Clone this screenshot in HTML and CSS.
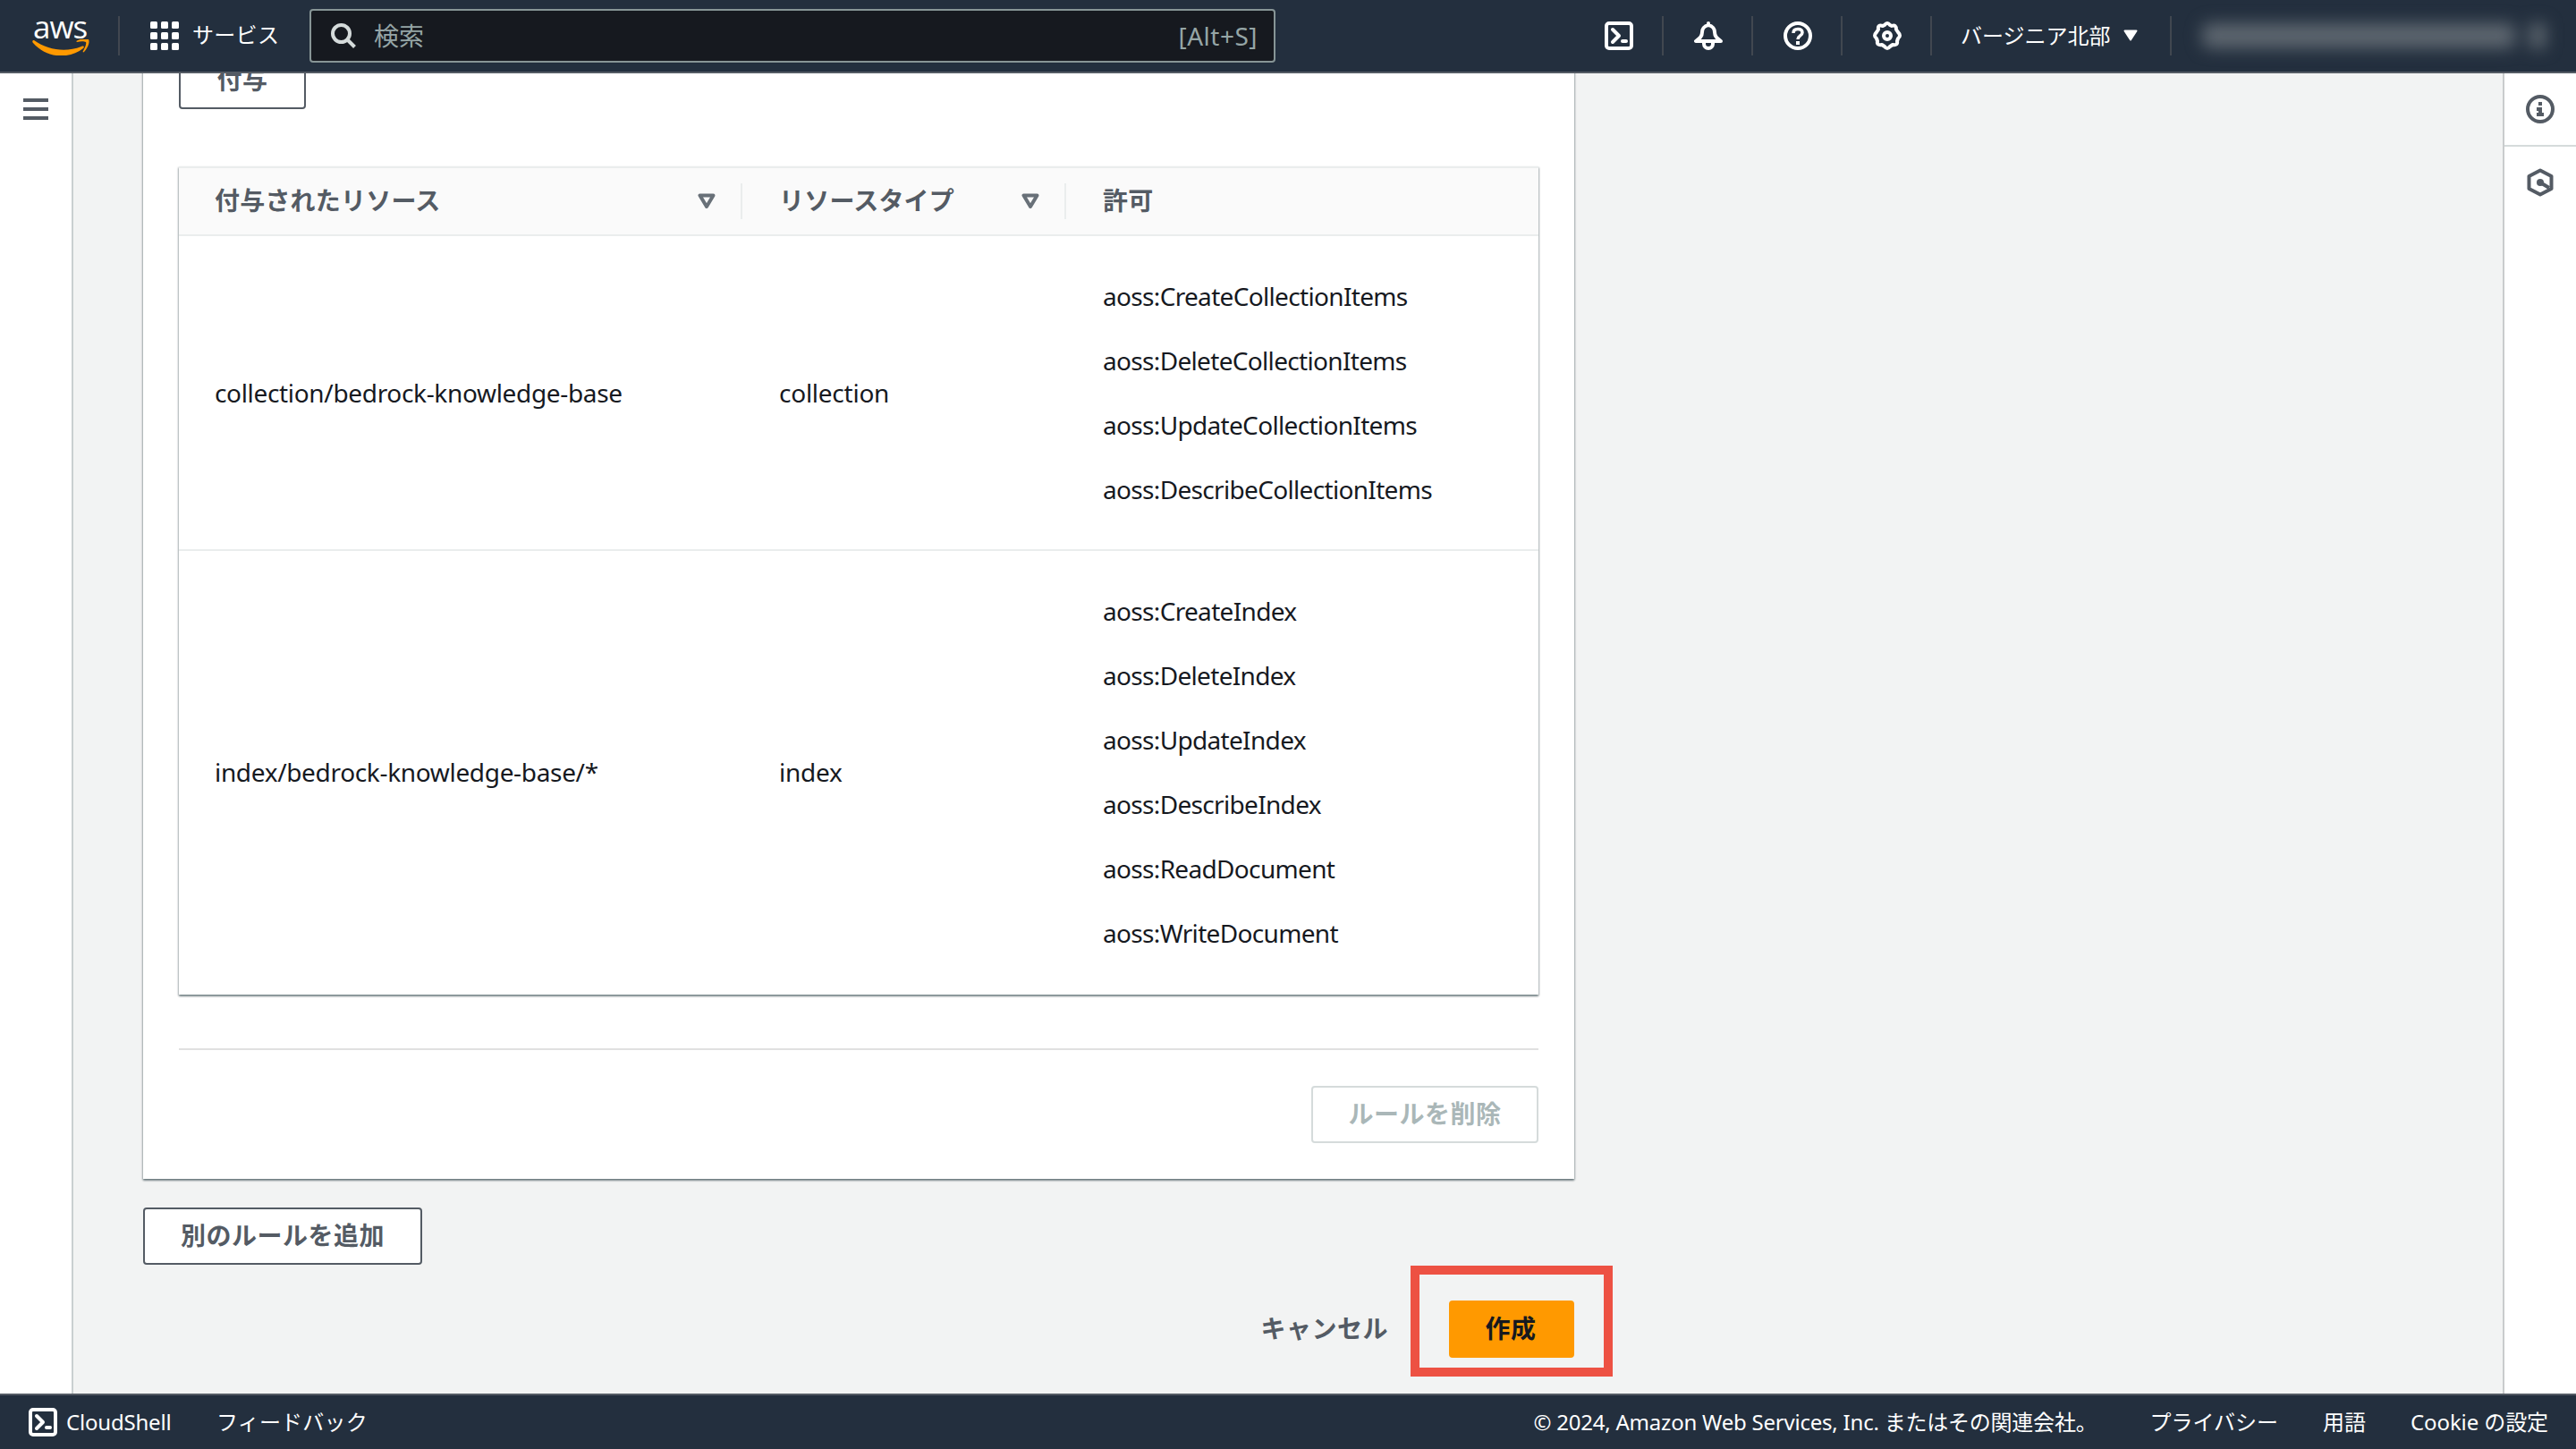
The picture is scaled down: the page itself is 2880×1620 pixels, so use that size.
FILE: index.html
```html
<!DOCTYPE html>
<html lang="ja">
<head>
    <meta charset="UTF-8">
    <title>Amazon OpenSearch Service</title>
    <link rel="stylesheet" href="styles.css">
</head>
<body>
    <header class="topbar">
        <a class="logo">
            <span class="logo-text">aws</span>
            <svg class="logo-smile" width="64" height="18" viewBox="0 0 64 18">
                <path fill="#ff9900" d="M1 1C0 2 0 3 1 4C17 22 42 22 57 10C59 8 57 7 55 8C37 15 18 12 2 1Z"/>
                <path fill="#ff9900" d="M50 3C49 2 49 2 51 1C55-1 61-1 63 0C65 4 61 11 58 14C57 15 56 14 57 13C59 9 61 5 60 3C58 2 54 2 50 3Z"/>
            </svg>
        </a>
        <span class="sep sep-logo"></span>
        <a class="services">
            <svg width="32" height="32" viewBox="0 0 32 32" fill="#fff">
                <rect x="0" y="0" width="8" height="8" rx="1.5"/><rect x="12" y="0" width="8" height="8" rx="1.5"/><rect x="24" y="0" width="8" height="8" rx="1.5"/>
                <rect x="0" y="12" width="8" height="8" rx="1.5"/><rect x="12" y="12" width="8" height="8" rx="1.5"/><rect x="24" y="12" width="8" height="8" rx="1.5"/>
                <rect x="0" y="24" width="8" height="8" rx="1.5"/><rect x="12" y="24" width="8" height="8" rx="1.5"/><rect x="24" y="24" width="8" height="8" rx="1.5"/>
            </svg>
            <span class="services-label">サービス</span>
        </a>
        <div class="search">
            <svg width="28" height="28" viewBox="0 0 28 28" fill="none" stroke="#d5dbdb" stroke-width="4">
                <circle cx="11.5" cy="11.5" r="9.5"/><path d="M18 18l8.5 8.5"/>
            </svg>
            <span class="search-label">検索</span>
            <span class="search-key">[Alt+S]</span>
        </div>
        <nav class="tools">
            <a class="tool">
                <svg width="32" height="32" viewBox="0 0 32 32" fill="none" stroke="#fff" stroke-width="4" stroke-linejoin="round">
                    <rect x="2" y="2" width="28" height="28" rx="3"/><path d="M9 9l7 7-7 7" stroke-linecap="round"/><path d="M20 22h4" stroke-linecap="round"/>
                </svg>
            </a>
            <a class="tool">
                <svg width="32" height="32" viewBox="0 0 32 32" fill="none" stroke="#fff" stroke-width="4" stroke-linejoin="round" stroke-linecap="round">
                    <path d="M16 2v2M16 4C11 5 9 9 9 12C9 17 6 19 2 22H30C26 19 23 17 23 12C23 9 21 5 16 4Z"/><path d="M11 23v2a5 5 0 0 0 10 0v-2"/>
                </svg>
            </a>
            <a class="tool">
                <svg width="32" height="32" viewBox="0 0 32 32" fill="none" stroke="#fff" stroke-width="4">
                    <circle cx="16" cy="16" r="14"/><path d="M11 13C11 9.500 13 8.500 16 8.500C19 8.500 21 10 21 12.500C21 16 16 16 16 20" stroke-width="3.500"/><rect x="14" y="22" width="4" height="4" fill="#fff" stroke="none"/>
                </svg>
            </a>
            <a class="tool">
                <svg width="32" height="32" viewBox="0 0 32 32" fill="none" stroke="#fff" stroke-width="4" stroke-linejoin="round">
                    <path d="M13 4Q16 0 19 4L21 5Q26 3 26 9L28 12Q32 16 28 19L27 22Q28 27 22 26L19 28Q16 32 13 28L10 26Q4 27 5 22L4 19Q0 16 4 12L6 9Q5 3 11 5Z"/>
                    <circle cx="16" cy="16" r="4"/>
                </svg>
            </a>
        </nav>
        <a class="region">
            <span>バージニア北部</span>
            <svg width="16" height="13" viewBox="0 0 16 13"><path d="M1.500 1.500h13L8 11.500z" fill="#fff" stroke="#fff" stroke-width="2" stroke-linejoin="round"/></svg>
        </a>
        <span class="sep"></span>
        <div class="account"><span class="account-name"></span><span class="account-caret"></span></div>
    </header>

    <div class="layout">
        <aside class="side-left">
            <svg width="28" height="24" viewBox="0 0 28 24" fill="#545b64"><path d="M0 0h28v4H0zM0 10h28v4H0zM0 20h28v4H0z"/></svg>
        </aside>

        <main class="content">
            <section class="container">
                <button class="btn btn-grant">付与</button>

                <div class="table">
                    <div class="row head">
                        <div class="cell"><span>付与されたリソース</span>
                            <svg width="20" height="18" viewBox="0 0 20 18"><path d="M2.500 2.500h15L10 15z" fill="none" stroke="#687078" stroke-width="4" stroke-linejoin="round"/></svg>
                        </div>
                        <div class="cell"><span>リソースタイプ</span>
                            <svg width="20" height="18" viewBox="0 0 20 18"><path d="M2.500 2.500h15L10 15z" fill="none" stroke="#687078" stroke-width="4" stroke-linejoin="round"/></svg>
                        </div>
                        <div class="cell"><span>許可</span></div>
                    </div>
                    <div class="row">
                        <div class="cell">collection/bedrock-knowledge-base</div>
                        <div class="cell type">collection</div>
                        <ul class="cell perms">
                            <li>aoss:CreateCollectionItems</li>
                            <li>aoss:DeleteCollectionItems</li>
                            <li>aoss:UpdateCollectionItems</li>
                            <li>aoss:DescribeCollectionItems</li>
                        </ul>
                    </div>
                    <div class="row">
                        <div class="cell">index/bedrock-knowledge-base/*</div>
                        <div class="cell type">index</div>
                        <ul class="cell perms">
                            <li>aoss:CreateIndex</li>
                            <li>aoss:DeleteIndex</li>
                            <li>aoss:UpdateIndex</li>
                            <li>aoss:DescribeIndex</li>
                            <li>aoss:ReadDocument</li>
                            <li>aoss:WriteDocument</li>
                        </ul>
                    </div>
                </div>

                <div class="container-footer">
                    <button class="btn" disabled>ルールを削除</button>
                </div>
            </section>

            <button class="btn add-rule">別のルールを追加</button>

            <div class="actions">
                <button class="btn btn-link">キャンセル</button>
                <div class="create-wrap">
                    <button class="btn btn-primary">作成</button>
                    <span class="highlight"></span>
                </div>
            </div>
        </main>

        <aside class="side-right">
            <a class="side-item">
                <svg width="32" height="32" viewBox="0 0 32 32" fill="#545b64">
                    <circle cx="16" cy="16" r="14" fill="none" stroke="#545b64" stroke-width="4"/><path d="M14 8h4v4h-4zM12 14h6v6h2v4h-8v-4h2v-2h-2z"/>
                </svg>
            </a>
            <a class="side-item">
                <svg width="32" height="32" viewBox="0 0 32 32" fill="none" stroke="#545b64" stroke-width="4" stroke-linejoin="round">
                    <path d="M16 2.500L28.500 9v14L16 29.500L3.500 23V9z"/><circle cx="16" cy="16" r="4" fill="#545b64" stroke="none"/><path d="M16 16l10 6"/>
                </svg>
            </a>
        </aside>
    </div>

    <footer class="bottombar">
        <a class="cloudshell">
            <svg width="32" height="32" viewBox="0 0 32 32" fill="none" stroke="#fff" stroke-width="4" stroke-linejoin="round">
                <rect x="2" y="2" width="28" height="28" rx="3"/><path d="M9 9l7 7-7 7" stroke-linecap="round"/><path d="M20 22h4" stroke-linecap="round"/>
            </svg>
            <span>CloudShell</span>
        </a>
        <a class="feedback">フィードバック</a>
        <span class="copyright">© 2024, Amazon Web Services, Inc. またはその関連会社。</span>
        <a class="privacy">プライバシー</a>
        <a class="terms">用語</a>
        <a class="cookie">Cookie の設定</a>
    </footer>
</body>
</html>
```
FILE: styles.css
```css
* {
    box-sizing: border-box;
}
body {
    margin: 0;
    font-family: "Noto Sans", "Noto Sans CJK JP", sans-serif;
    font-size: 28px;
    line-height: 44px;
    color: #16191f;
    background: #f2f3f3;
    overflow: hidden;
}
svg {
    display: block;
    flex: none;
}

/* top navigation */
.topbar {
    position: fixed;
    z-index: 10;
    top: 0;
    left: 0;
    width: 100%;
    height: 82px;
    padding-left: 36px;
    display: flex;
    align-items: center;
    background: #232f3e;
    border-bottom: 2px solid #545b64;
    color: #fff;
    font-size: 24px;
    line-height: 36px;
    white-space: nowrap;
}
.logo {
    width: 96px;
    display: flex;
    flex-direction: column;
}
.logo-text {
    font-family: "Open Sans", sans-serif;
    font-size: 35px;
    font-weight: 500;
    line-height: 28px;
    letter-spacing: -1px;
    padding-left: 1px;
    margin-top: -2px;
}
.sep {
    width: 2px;
    height: 44px;
    background: #414750;
}
.services {
    width: 212px;
    padding-left: 34px;
    display: flex;
    align-items: center;
    gap: 15px;
}
.services-label {
    padding-bottom: 2px;
    letter-spacing: 0.3px;
}
.search {
    width: 1080px;
    height: 60px;
    padding: 0 18px 0 22px;
    display: flex;
    align-items: center;
    background: #16191f;
    border: 2px solid #879596;
    border-radius: 4px;
    color: #95a5a6;
    font-size: 28px;
}
.search-label {
    margin-left: 20px;
    padding-bottom: 1px;
}
.search-key {
    margin-left: auto;
    letter-spacing: 0.5px;
    padding-bottom: 1px;
}
.tools {
    display: flex;
    margin-left: 334px;
}
.tool {
    width: 100px;
    height: 44px;
    padding-left: 34px;
    display: flex;
    align-items: center;
    border-right: 2px solid #414750;
}
.region {
    width: 266px;
    padding-left: 32px;
    padding-bottom: 1px;
    display: flex;
    align-items: center;
    gap: 14px;
}
.account {
    margin-left: 34px;
    display: flex;
    align-items: center;
    gap: 16px;
    filter: blur(9px);
}
.account-name {
    width: 350px;
    height: 28px;
    background: #5d666f;
    border-radius: 8px;
}
.account-caret {
    width: 18px;
    height: 28px;
    background: #5d666f;
}

/* page */
.layout {
    height: 1620px;
    display: grid;
    grid-template-columns: 82px 1fr 82px;
}
.side-left {
    background: #fff;
    border-right: 2px solid #c9cfd0;
    padding: 110px 0 0 26px;
}
.side-right {
    background: #fff;
    border-left: 2px solid #c9cccd;
    padding-top: 82px;
}
.side-item {
    height: 82px;
    padding: 0 0 2px 24px;
    display: flex;
    align-items: center;
}
.side-item:first-child {
    padding-bottom: 0;
    border-bottom: 2px solid #d5dbdb;
}
.content {
    padding-left: 78px;
}
.container {
    width: 1600px;
    height: 1318px;
    padding: 58px 40px 0;
    background: #fff;
    box-shadow: 0 2px 2px 0 rgba(0, 28, 36, 0.4), 1px 1px 2px 0 rgba(0, 28, 36, 0.2), -1px 1px 2px 0 rgba(0, 28, 36, 0.2);
}
.btn {
    display: block;
    height: 64px;
    padding: 0 40px 2px;
    border: 2px solid #545b64;
    border-radius: 4px;
    background: #fff;
    color: #545b64;
    font-family: inherit;
    font-size: 28px;
    font-weight: bold;
    line-height: 40px;
    letter-spacing: 0.5px;
    white-space: nowrap;
}
.btn:disabled {
    width: 254px;
    padding-left: 39px;
    padding-right: 39px;
    border-color: #d5dbdb;
    color: #aab7b8;
}
.btn-grant {
    width: 142px;
}
.table {
    margin-top: 64px;
    border-top: 2px solid #eaeded;
    box-shadow: 0 2px 2px 0 rgba(0, 28, 36, 0.4), 1px 1px 2px 0 rgba(0, 28, 36, 0.2), -1px 1px 2px 0 rgba(0, 28, 36, 0.2);
}
.row {
    display: grid;
    grid-template-columns: 630px 362px 1fr;
    align-items: center;
    border-bottom: 2px solid #eaeded;
}
.row:last-child {
    padding-bottom: 2px;
    border-bottom: none;
}
.cell {
    margin: 0;
    padding-left: 41px;
    letter-spacing: -0.33px;
}
.cell:first-child {
    padding-left: 40px;
}
.head {
    height: 76px;
    background: #fafafa;
    color: #545b64;
    font-weight: bold;
}
.head .cell {
    height: 40px;
    display: flex;
    align-items: center;
    justify-content: space-between;
    padding-right: 28px;
    border-right: 2px solid #eaeded;
    letter-spacing: 0.2px;
}
.head .cell span {
    padding-bottom: 3px;
}
.head .cell:last-child {
    border-right: none;
}
.type {
    letter-spacing: -0.25px;
}
.perms {
    list-style: none;
    padding-top: 31px;
    padding-bottom: 31px;
    letter-spacing: -0.67px;
}
.perms li {
    height: 72px;
    line-height: 73px;
}
.container-footer {
    margin-top: 60px;
    padding-top: 40px;
    border-top: 2px solid #e0e0e0;
    display: flex;
    justify-content: flex-end;
}
.add-rule {
    margin-top: 32px;
}
.actions {
    width: 1600px;
    margin-top: 40px;
    display: flex;
    justify-content: flex-end;
    gap: 26px;
}
.btn-link {
    background: none;
    border-color: transparent;
}
.create-wrap {
    position: relative;
}
.btn-primary {
    width: 140px;
    padding-left: 38px;
    background: #ff9900;
    border-color: #ff9900;
    color: #16191f;
}
.highlight {
    position: absolute;
    top: -39px;
    left: -43px;
    width: 226px;
    height: 124px;
    border: 10px solid #ed5143;
}

/* bottom bar */
.bottombar {
    position: fixed;
    left: 0;
    bottom: 0;
    width: 100%;
    height: 62px;
    padding: 0 31px 0 32px;
    display: flex;
    align-items: center;
    background: #232f3e;
    border-top: 2px solid #545b64;
    color: #fff;
    font-size: 24px;
    line-height: 36px;
    white-space: nowrap;
}
.cloudshell {
    width: 210px;
    display: flex;
    align-items: center;
    gap: 10px;
    letter-spacing: -0.2px;
}
.feedback,
.privacy,
.terms,
.cookie,
.copyright {
    padding-bottom: 1px;
}
.feedback {
    letter-spacing: 0.2px;
}
.copyright {
    margin-left: auto;
    letter-spacing: -0.22px;
}
.privacy {
    margin-left: 59px;
}
.terms {
    margin-left: 50px;
}
.cookie {
    margin-left: 50px;
    letter-spacing: -0.1px;
}
```
